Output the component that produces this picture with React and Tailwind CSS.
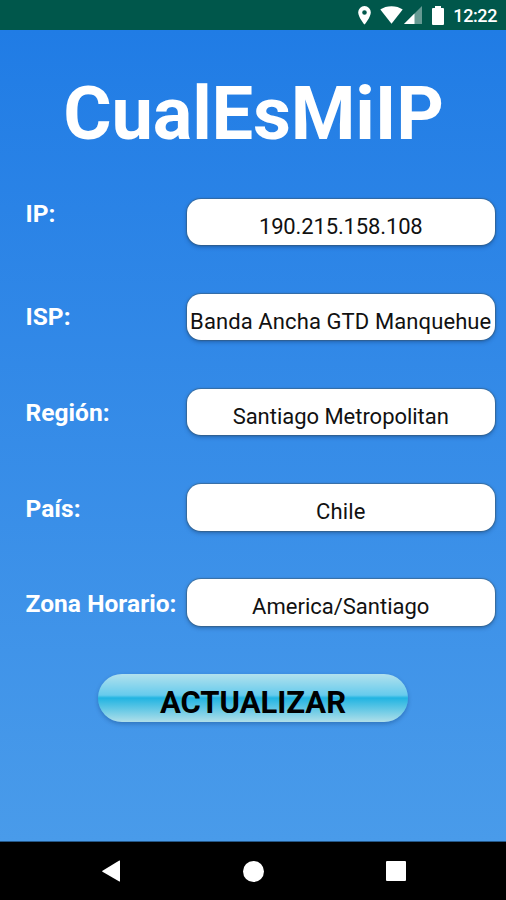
const rows = [
  { label: 'IP:', value: '190.215.158.108', offset: 'pt-[2px]', valueSpacing: 'tracking-[-0.14px]' },
  { label: 'ISP:', value: 'Banda Ancha GTD Manquehue', offset: 'pt-[9.5px]', valueSpacing: 'tracking-[0.1px]' },
  { label: 'Región:', value: 'Santiago Metropolitan', offset: 'pt-[10.5px]', valueSpacing: 'tracking-[-0.03px]' },
  { label: 'País:', value: 'Chile', offset: 'pt-[11px]', valueSpacing: 'tracking-[0.1px]' },
  { label: 'Zona Horario:', value: 'America/Santiago', offset: 'pt-[11px]', valueSpacing: 'tracking-[0px]' },
];

function StatusBar() {
  return (
    <header className="flex h-[30px] shrink-0 items-center justify-end bg-[#00574b] pr-[9px] text-white">
      <svg width="13" height="19" viewBox="0 0 13 19" className="mr-[9px]">
        <path fillRule="evenodd" fill="#fff" d="M6.5 0A6.3 6.3 0 0 0 .2 6.4C.2 11 6.5 18.6 6.5 18.6S12.8 11 12.8 6.4A6.3 6.3 0 0 0 6.5 0Zm0 4.2a2.3 2.3 0 1 1 0 4.6 2.3 2.3 0 0 1 0-4.6Z" />
      </svg>
      <svg width="23" height="18" viewBox="0 0 23 18" className="mr-[1px]">
        <path fill="#fff" d="M11.5 17.8.3 3.6C3.3 1.3 7.2.2 11.5.2s8.200 1.100 11.200 3.400Z" />
      </svg>
      <svg width="18" height="18" viewBox="0 0 18 18" className="mr-[10px]">
        <path fill="#fff" fillOpacity=".4" d="M0 18 18 0v18Z" />
        <path fill="#fff" d="M0 18 10.500 7.500V18Z" />
      </svg>
      <svg width="12" height="19" viewBox="0 0 12 19" className="mr-[9px]">
        <path fill="#fff" d="M3 0h6v2h2q1 0 1 1v15q0 1-1 1H1q-1 0-1-1V3q0-1 1-1h2Z" />
      </svg>
      <span className="pt-[2px] text-[18px] font-medium leading-[20px] tracking-[-0.4px]">12:22</span>
    </header>
  );
}

function NavBar() {
  return (
    <nav className="flex h-[58px] shrink-0 items-center bg-black pl-[102px] shadow-[0_-1px_0_#245889]">
      <svg width="19" height="22" viewBox="0 0 19 22" className="mr-[122px]">
        <path fill="#fff" d="M17.300.500Q18 .2 18 1v20q0 .8-.7.500L.5 11.700q-.7-.5 0-1Z" />
      </svg>
      <span className="mr-[122px] h-[21px] w-[21px] rounded-full bg-white" />
      <span className="h-[20px] w-[20px] rounded-[1px] bg-white" />
    </nav>
  );
}

export default function App() {
  return (
    <div className="flex h-[900px] w-[506px] flex-col overflow-hidden bg-black font-[Roboto,sans-serif]">
      <StatusBar />
      <main className="flex flex-1 flex-col bg-linear-to-b from-[#207ce5] to-[#499bea]">
        <h1 className="h-[168px] whitespace-nowrap pl-[1px] pt-[40px] text-center text-[74px] font-bold leading-[88px] tracking-[-0.2px] text-white">
          CualEsMiIP
        </h1>
        <div className="flex flex-col">
          {rows.map((row) => (
            <div key={row.label} className="flex h-[95.2px] items-start pl-[25.5px] pr-[11px]">
              <div className={`w-[161px] shrink-0 whitespace-nowrap text-[24.5px] font-bold leading-[28px] tracking-[0.05px] text-white ${row.offset}`}>
                {row.label}
              </div>
              <div className={`mt-[0.5px] flex h-[46.5px] flex-1 justify-center whitespace-nowrap rounded-[14px] bg-white pt-[5px] text-[22px] leading-[46px] text-[#111] shadow-[0_0_1px_1px_rgba(60,85,100,0.5),0_2px_4px_rgba(0,30,70,0.35)] ${row.valueSpacing}`}>
                {row.value}
              </div>
            </div>
          ))}
        </div>
        <button className="ml-[98px] h-[48px] w-[310px] rounded-[24px] bg-[linear-gradient(to_bottom,#b2e1ed_0%,#66cbed_44%,#21b4e2_50%,#b0dfe9_100%)] pt-[10px] text-[31px] font-bold leading-[38px] text-black shadow-[0_2px_4px_rgba(0,40,90,0.3)]">
          ACTUALIZAR
        </button>
      </main>
      <NavBar />
    </div>
  );
}
